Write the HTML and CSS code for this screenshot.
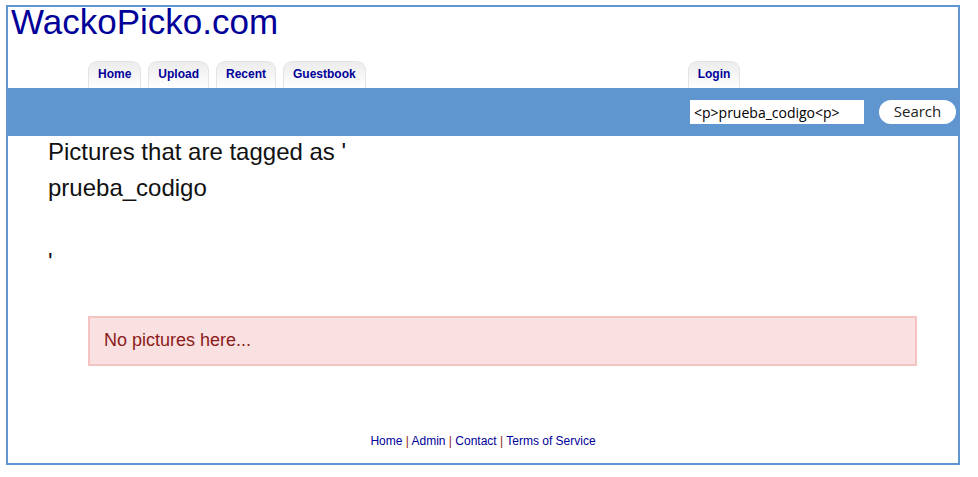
FILE: index.html
```html
<!DOCTYPE html>
<html>
<head>
<meta charset="utf-8">
<title>WackoPicko.com</title>
<link rel="stylesheet" href="styles.css">
</head>
<body>
<div class="page">
  <div class="header">
    <h1 class="title"><a href="#">WackoPicko.com</a></h1>
    <div class="tabs">
      <ul class="tabs-left">
        <li class="tab"><a href="#">Home</a></li>
        <li class="tab"><a href="#">Upload</a></li>
        <li class="tab"><a href="#">Recent</a></li>
        <li class="tab"><a href="#">Guestbook</a></li>
      </ul>
      <ul class="tabs-right">
        <li class="tab"><a href="#">Login</a></li>
      </ul>
    </div>
  </div>
  <div class="searchbar">
    <form class="search-form">
      <input class="search-input" type="text" value="<p>prueba_codigo<p>">
      <button class="search-button" type="button">Search</button>
    </form>
  </div>
  <div class="content">
    <h2 class="tag-heading">
      <span class="line">Pictures that are tagged as '</span>
      <span class="line">prueba_codigo</span>
      <span class="line blank"></span>
      <span class="line">'</span>
    </h2>
    <div class="error-box">No pictures here...</div>
  </div>
  <div class="footer">
    <a href="#">Home</a> | <a href="#">Admin</a> | <a href="#">Contact</a> | <a href="#">Terms of Service</a>
  </div>
</div>
</body>
</html>
```
FILE: styles.css
```css
html, body {
  margin: 0;
  padding: 0;
  background: #ffffff;
}
body {
  font-family: "Liberation Sans", Arial, sans-serif;
}
.page {
  margin: 5px 0 0 6px;
  width: 950px;
  height: 456px;
  border: 2px solid #6096d0;
  display: flex;
  flex-direction: column;
}
.header {
  display: flex;
  flex-direction: column;
}
.title {
  margin: 0;
  padding: 1px 0 0 3px;
  font-size: 35px;
  font-weight: normal;
  line-height: 28px;
  height: 29px;
}
.title a {
  color: #000099;
  text-decoration: none;
}
.tabs {
  margin-top: 24px;
  height: 27px;
  display: flex;
  padding-left: 80px;
}
.tabs ul {
  list-style: none;
  margin: 0;
  padding: 0;
  display: flex;
  gap: 7px;
}
.tabs .tabs-right {
  margin-left: 322px;
}
.tab {
  height: 27px;
  border: 1px solid #e4e4e4;
  border-bottom: none;
  border-radius: 9px 9px 0 0;
  background: linear-gradient(to bottom, #ececec 0%, #ffffff 100%);
  box-sizing: border-box;
  padding: 5px 9px 0 9px;
  display: flex;
  align-items: flex-start;
}
.tab a {
  font-size: 12px;
  line-height: 14px;
  font-weight: bold;
  color: #000099;
  text-decoration: none;
}
.searchbar {
  height: 48px;
  background: #6096d0;
  display: flex;
  justify-content: flex-end;
  align-items: center;
  padding-right: 2px;
}
.search-form {
  display: flex;
  align-items: center;
  gap: 15px;
  margin: 0;
}
.search-input {
  width: 174px;
  height: 24px;
  box-sizing: border-box;
  border: none;
  margin: 0;
  padding: 0 4px;
  font-family: "Open Sans", "DejaVu Sans", sans-serif;
  font-size: 14px;
  color: #000;
  background: #fff;
}
.search-button {
  width: 77px;
  height: 24px;
  border: none;
  border-radius: 12px;
  background: #fff;
  font-family: "Open Sans", "DejaVu Sans", sans-serif;
  font-size: 15px;
  color: #222;
  padding: 0 0 2px 0;
  margin: 0;
}
.content {
  padding: 0 40px 0 40px;
  flex: 1;
}
.tag-heading {
  margin: -2px 0 0 0;
  font-size: 24px;
  font-weight: normal;
  line-height: 36px;
  color: #111;
  display: flex;
  flex-direction: column;
}
.line {
  display: block;
  height: 36px;
}
.line.blank {
  height: 38px;
}
.error-box {
  margin: 36px 0 0 40px;
  width: 829px;
  height: 50px;
  box-sizing: border-box;
  background: #fae1e1;
  border: 2px solid #f6c3c3;
  color: #8b1a1a;
  font-size: 18px;
  padding: 0 0 2px 14px;
  display: flex;
  align-items: center;
}
.footer {
  height: 29px;
  text-align: center;
  font-size: 12px;
  color: #8b1a1a;
}
.footer a {
  color: #000099;
  text-decoration: none;
}
```
